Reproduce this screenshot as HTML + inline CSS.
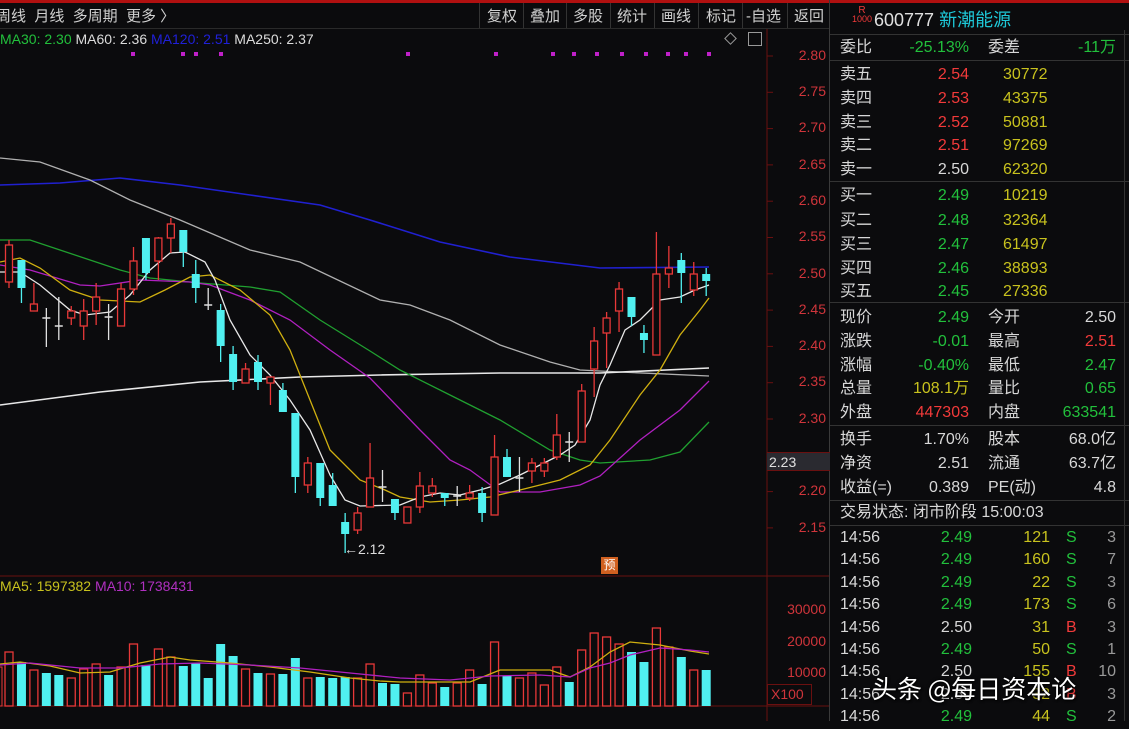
<!DOCTYPE html>
<html><head><meta charset="utf-8"><style>
*{margin:0;padding:0;box-sizing:border-box}
html,body{width:1129px;height:721px}
body{background:#0b0b0d;overflow:hidden;position:relative;font-family:"Liberation Sans","Noto Sans CJK SC",sans-serif;color:#d8d8d8}
.a{position:absolute;white-space:nowrap}
.tb{font-size:15px;color:#d0d0d0;top:5px}
.sp{position:absolute;top:3px;width:1px;height:25px;background:#333}
.r{color:#f23a3a}.g{color:#22c03c}.y{color:#c8c21e}.w{color:#dcdcdc}.c{color:#1ec8d8}
.rp{font-size:16px;line-height:20px}
.rt{text-align:right}
.pl{font-size:14px;color:#d0353b;right:303px;text-align:right}
</style></head><body>
<div class="a" style="left:0;top:0;width:1129px;height:3px;background:#b01010"></div>
<div class="a" style="left:0;top:28px;width:830px;height:1px;background:#2a2a2a"></div>
<div class="a tb" style="left:-4px">周线&nbsp;&nbsp;月线&nbsp;&nbsp;多周期&nbsp;&nbsp;更多 〉</div>
<div class="sp" style="left:479px"></div><div class="sp" style="left:523px"></div><div class="sp" style="left:566px"></div><div class="sp" style="left:610px"></div><div class="sp" style="left:654px"></div><div class="sp" style="left:698px"></div><div class="sp" style="left:742px"></div><div class="sp" style="left:787px"></div>
<div class="a tb" style="left:487px">复权</div><div class="a tb" style="left:530px">叠加</div><div class="a tb" style="left:573px">多股</div><div class="a tb" style="left:617px">统计</div><div class="a tb" style="left:661px">画线</div><div class="a tb" style="left:706px">标记</div><div class="a tb" style="left:746px">-自选</div><div class="a tb" style="left:794px">返回</div>
<div class="a" style="left:0;top:31px;font-size:14px"><span class="g">MA30: 2.30</span> <span class="w">MA60: 2.36</span> <span style="color:#2020d8">MA120: 2.51</span> <span class="w">MA250: 2.37</span></div>
<div class="a" style="left:726px;top:34px;width:9px;height:9px;border:1px solid #999;transform:rotate(45deg)"></div>
<div class="a" style="left:748px;top:32px;width:14px;height:14px;border:1px solid #999"></div>
<div class="a" style="left:0;top:578px;font-size:14px"><span class="y">MA5: 1597382</span> <span style="color:#b030c0">MA10: 1738431</span></div>
<svg class="a" style="left:0;top:0" width="830" height="721" id="sv">
<line x1="767" y1="29" x2="767" y2="721" stroke="#6a1010"/>
<line x1="0" y1="576" x2="830" y2="576" stroke="#6a1010"/>
<line x1="0" y1="706" x2="830" y2="706" stroke="#6a1010"/>
<line x1="829.5" y1="0" x2="829.5" y2="721" stroke="#3a3a3a"/>
</svg>
<div class="a pl" style="top:47px">2.80</div><div class="a pl" style="top:83px">2.75</div><div class="a pl" style="top:119px">2.70</div><div class="a pl" style="top:156px">2.65</div><div class="a pl" style="top:192px">2.60</div><div class="a pl" style="top:228px">2.55</div><div class="a pl" style="top:265px">2.50</div><div class="a pl" style="top:301px">2.45</div><div class="a pl" style="top:337px">2.40</div><div class="a pl" style="top:373px">2.35</div><div class="a pl" style="top:410px">2.30</div><div class="a pl" style="top:482px">2.20</div><div class="a pl" style="top:519px">2.15</div>
<div class="a pl" style="top:601px">30000</div><div class="a pl" style="top:633px">20000</div><div class="a pl" style="top:664px">10000</div>
<div class="a" style="left:767px;top:684px;width:45px;height:21px;border:1px solid #6a1010;color:#d0353b;font-size:14px;padding:1px 3px">X100</div>
<div class="a" style="left:767px;top:452px;width:63px;height:19px;background:#2a2a30;border-top:1px solid #6a1010;border-bottom:1px solid #6a1010;color:#e0e0e0;font-size:14px;padding:1px 2px">2.23</div>
<div class="a" style="left:344px;top:541px;font-size:14px;color:#ddd">←2.12</div>
<div class="a" style="left:601px;top:557px;width:17px;height:17px;background:#d06020;color:#fff;font-size:12px;text-align:center;line-height:17px">预</div>

<div class="a" style="left:852px;top:6px;font-size:10px;color:#f23a3a;line-height:9px;text-align:center">R<br><span style="font-size:9px">1000</span></div>
<div class="a" style="left:874px;top:6px;font-size:18px;color:#e0e0e0">600777 <span class="c">新潮能源</span></div>
<div class="a" style="left:830px;top:34px;width:299px;height:1px;background:#333"></div>
<div class="a" style="left:830px;top:60px;width:299px;height:1px;background:#333"></div>
<div class="a" style="left:830px;top:181px;width:299px;height:1px;background:#333"></div>
<div class="a" style="left:830px;top:302px;width:299px;height:1px;background:#333"></div>
<div class="a" style="left:830px;top:425px;width:299px;height:1px;background:#333"></div>
<div class="a" style="left:830px;top:500px;width:299px;height:1px;background:#333"></div>
<div class="a" style="left:830px;top:525px;width:299px;height:1px;background:#333"></div>
<div class="a" style="left:1124px;top:30px;width:1px;height:691px;background:#333"></div>
<script>
const sv=document.getElementById('sv');let h='';
[133,183,196,221,408,496,553,574,597,622,646,668,686,709].forEach(x=>h+=`<rect x="${x-2}" y="52" width="4" height="4" fill="#c020c8"/>`);
for(let y=56;y<=528;y+=36.3)h+=`<line x1="767" y1="${y}" x2="773" y2="${y}" stroke="#6a1010"/>`;
function pl(p,c,w){h+=`<polyline points="${p}" fill="none" stroke="${c}" stroke-width="${w||1.3}"/>`}
pl("0,185 60,183 120,178 180,185 250,195 320,205 370,220 440,242 510,257 600,268 709,267","#2020d0",1.6);
pl("0,158 40,162 90,180 130,200 180,220 250,250 300,262 380,300 410,305 450,320 500,345 550,362 580,370 620,372 709,376","#b0b0b0");
pl("0,405 100,392 200,382 300,377 380,375 500,373 600,373 709,368","#e8e8e8",1.6);
pl("0,240 30,240 60,250 120,270 150,278 200,283 250,287 280,292 320,320 370,351 400,370 450,395 500,420 550,450 580,460 600,463 650,460 680,452 709,422","#20a030");
pl("0,265 30,270 80,285 100,286 140,280 190,282 210,285 250,300 290,320 330,350 370,378 420,430 450,460 470,470 500,492 540,492 580,485 600,476 640,440 680,410 709,381","#b020c0");
pl("0,262 20,258 40,268 70,290 100,300 140,302 165,290 190,277 210,275 240,290 270,315 290,350 310,400 330,450 360,480 385,490 400,497 430,502 460,500 490,497 520,490 560,480 590,465 610,440 640,395 660,370 680,335 700,310 709,298","#d0b010");
pl("0,272 20,272 40,285 70,310 85,315 110,312 130,295 150,270 170,253 185,252 205,262 215,280 230,320 250,355 270,375 290,400 310,430 330,475 345,500 360,506 400,505 420,497 440,493 460,495 480,490 500,484 520,475 540,465 560,455 575,445 590,420 600,385 610,365 625,330 640,320 660,300 680,297 695,290 709,285","#e8e8e8");
const C=[["r",245,282,240,288],["c",260,288,260,303],["r",304,311,283,311],["x",318,318,308,347],["x",326,326,297,340],["r",311,318,306,325],["r",311,326,299,340],["r",297,311,283,325],["x",317,317,304,340],["r",289,326,283,326],["r",261,289,247,295],["c",238,273,238,280],["r",238,261,237,280],["r",224,238,218,253],["c",230,252,230,267],["c",274,288,260,303],["x",305,305,288,310],["c",310,346,304,362],["c",354,382,346,390],["r",369,383,363,383],["c",362,382,355,390],["r",377,383,377,405],["c",390,412,383,412],["c",413,477,413,493],["r",463,485,457,493],["c",463,498,463,506],["c",485,506,473,506],["c",522,534,513,553],["r",513,530,507,534],["r",478,507,443,507],["x",487,487,470,502],["c",499,513,499,520],["r",507,523,507,523],["r",486,507,472,513],["r",486,493,478,497],["c",493,498,493,506],["x",496,496,486,506],["r",493,498,485,501],["c",493,513,487,522],["r",457,515,435,515],["c",457,477,449,477],["x",478,478,457,492],["r",463,471,458,483],["r",463,471,458,477],["r",435,457,414,460],["x",442,442,432,462],["r",391,442,384,442],["r",341,369,327,397],["r",318,333,312,368],["r",289,311,282,332],["c",297,317,297,326],["c",333,340,325,353],["r",274,355,232,355],["r",268,274,246,288],["c",260,273,253,303],["r",274,290,262,296],["c",274,281,268,296]];
const V=[652,662,670,673,675,678,669,664,675,667,644,665,649,657,666,663,678,644,656,669,673,674,674,658,678,677,678,677,678,664,683,684,693,675,683,687,683,670,684,642,676,678,673,685,667,682,650,633,637,644,652,662,628,647,657,670,670,682];
const VC="rcrccrrrcrrcrrcccccrcrccrcccrrccrrrcrrcrcrrrrcrrrrccrrcrc";
C.forEach((k,i)=>{const x=9+12.45*i;const col=k[0]=="c"?"#50f0f0":k[0]=="r"?"#e83838":"#e0e0e0";
h+=`<line x1="${x}" y1="${k[3]}" x2="${x}" y2="${k[4]}" stroke="${col}" stroke-width="1.3"/>`;
if(k[0]=="x")h+=`<line x1="${x-4}" y1="${k[1]}" x2="${x+4}" y2="${k[1]}" stroke="${col}" stroke-width="1.5"/>`;
else if(k[0]=="c")h+=`<rect x="${x-4}" y="${k[1]}" width="8" height="${Math.max(2,k[2]-k[1])}" fill="${col}"/>`;
else h+=`<rect x="${x-3.5}" y="${k[1]}" width="7" height="${Math.max(2,k[2]-k[1])}" fill="#0b0b0d" stroke="${col}" stroke-width="1.3"/>`;
const vt=V[i],vc=VC[i];
if(vc=="c")h+=`<rect x="${x-4.5}" y="${vt}" width="9" height="${706-vt}" fill="#50f0f0"/>`;
else h+=`<rect x="${x-4}" y="${vt}" width="8" height="${706-vt}" fill="none" stroke="#e83838" stroke-width="1.3"/>`;
});
h+=`<rect x="-4" y="667" width="6" height="39" fill="none" stroke="#e83838"/>`;
pl("0,664 20,662 50,666 80,673 110,672 140,663 170,657 190,660 230,663 270,667 310,672 350,678 380,681 400,682 440,682 470,682 500,670 520,670 550,670 570,677 590,667 610,652 630,642 660,645 690,651 709,654","#d0b010");
pl("0,665 30,663 80,668 120,668 160,664 200,663 250,665 300,668 350,673 400,678 450,680 490,676 540,675 570,677 590,668 610,663 630,655 660,648 690,650 709,652","#b020c0");
sv.innerHTML+=h;
</script>
<div class="a rp" style="left:840px;top:38px">委比</div><div class="a rp g rt" style="left:880px;width:89px;top:38px">-25.13%</div>
<div class="a rp" style="left:988px;top:38px">委差</div><div class="a rp g rt" style="left:1040px;width:76px;top:38px">-11万</div>

<div class="a rp" style="left:840px;top:63px;line-height:23.8px">卖五<br>卖四<br>卖三<br>卖二<br>卖一<br><span style="line-height:27px">买一</span><br>买二<br>买三<br>买四<br>买五</div>
<div class="a rp rt" style="left:900px;width:69px;top:63px;line-height:23.8px"><span class="r">2.54<br>2.53<br>2.52<br>2.51</span><br>2.50<br><span class="g" style="line-height:27px">2.49</span><span class="g"><br>2.48<br>2.47<br>2.46<br>2.45</span></div>
<div class="a rp y" style="left:1003px;top:63px;line-height:23.8px">30772<br>43375<br>50881<br>97269<br>62320<br><span style="line-height:27px">10219</span><br>32364<br>61497<br>38893<br>27336</div>

<div class="a rp" style="left:840px;top:306px;line-height:23.8px">现价<br>涨跌<br>涨幅<br>总量<br>外盘</div>
<div class="a rp rt" style="left:880px;width:89px;top:306px;line-height:23.8px"><span class="g">2.49<br>-0.01<br>-0.40%</span><br><span class="y">108.1万</span><br><span class="r">447303</span></div>
<div class="a rp" style="left:988px;top:306px;line-height:23.8px">今开<br>最高<br>最低<br>量比<br>内盘</div>
<div class="a rp rt" style="left:1030px;width:86px;top:306px;line-height:23.8px">2.50<br><span class="r">2.51</span><br><span class="g">2.47<br>0.65<br>633541</span></div>

<div class="a rp" style="left:840px;top:428px;line-height:23.8px">换手<br>净资<br>收益(=)</div>
<div class="a rp rt" style="left:880px;width:89px;top:428px;line-height:23.8px">1.70%<br>2.51<br>0.389</div>
<div class="a rp" style="left:988px;top:428px;line-height:23.8px">股本<br>流通<br>PE(动)</div>
<div class="a rp rt" style="left:1030px;width:86px;top:428px;line-height:23.8px">68.0亿<br>63.7亿<br>4.8</div>
<div class="a rp" style="left:840px;top:503px">交易状态: 闭市阶段 15:00:03</div>

<div class="a rp" style="left:840px;top:527px;line-height:22.4px">14:56<br>14:56<br>14:56<br>14:56<br>14:56<br>14:56<br>14:56<br>14:56<br>14:56</div>
<div class="a rp rt" style="left:920px;width:52px;top:527px;line-height:22.4px"><span class="g">2.49<br>2.49<br>2.49<br>2.49</span><br>2.50<br><span class="g">2.49</span><br>2.50<br>2.50<br><span class="g">2.49</span></div>
<div class="a rp rt y" style="left:1000px;width:50px;top:527px;line-height:22.4px">121<br>160<br>22<br>173<br>31<br>50<br>155<br>32<br>44</div>
<div class="a rp" style="left:1066px;top:527px;line-height:22.4px"><span class="g">S<br>S<br>S<br>S</span><br><span class="r">B</span><br><span class="g">S</span><br><span class="r">B<br>B</span><br><span class="g">S</span></div>
<div class="a rp rt" style="left:1090px;width:26px;top:527px;line-height:22.4px;color:#999">3<br>7<br>3<br>6<br>3<br>1<br>10<br>3<br>2</div>
<div class="a" style="left:872px;top:670px;font-size:25px;color:#fff;font-family:'Noto Sans CJK SC',sans-serif;text-shadow:0 0 3px #000,1px 1px 2px #000">头条 @每日资本论</div>
</body></html>
